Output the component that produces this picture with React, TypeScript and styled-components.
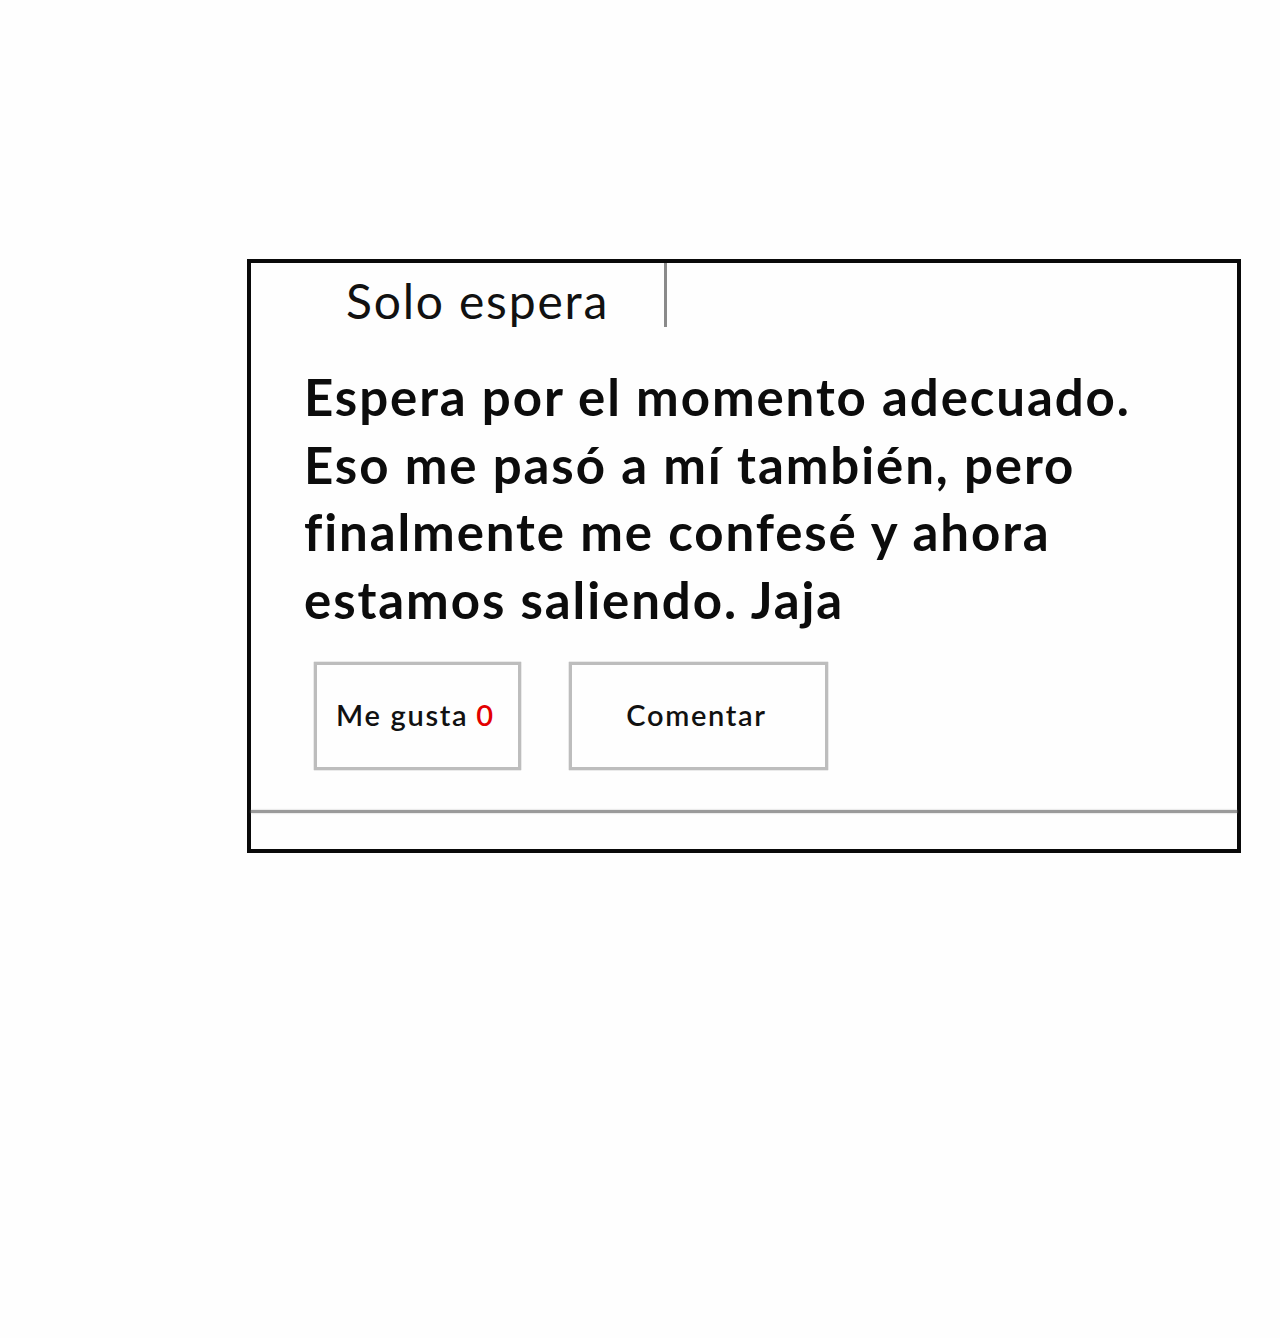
import React from "react";
import styled, { createGlobalStyle } from "styled-components";

const Global = createGlobalStyle`
  html, body { margin: 0; padding: 0; background: #fefefe; }
  body { font-family: Lato, "Open Sans", sans-serif; color: #000; }
`;

const Page = styled.div`
  width: 1280px;
  height: 1338px;
  padding-top: 259px;
  padding-left: 247px;
  box-sizing: border-box;
`;

const Card = styled.div`
  width: 994px;
  height: 594px;
  box-sizing: border-box;
  border: 4px solid #0a0a0a;
  display: flex;
  flex-direction: column;
  background: #fefefe;
`;

const Header = styled.div`
  display: flex;
  align-items: stretch;
  height: 64px;
`;

const TitleBox = styled.div`
  width: 416px;
  box-sizing: border-box;
  padding-left: 95px;
  padding-top: 9px;
  border-right: 3px solid #8a8a8a;
  font-size: 48px;
  font-weight: 400;
  line-height: 58px;
  letter-spacing: 1.8px;
  color: #111;
`;

const Body = styled.p`
  margin: 36px 0 0 53px;
  font-size: 51px;
  font-weight: 700;
  line-height: 67.5px;
  letter-spacing: 1.9px;
  color: #0c0c0c;
  width: 850px;
`;

const Actions = styled.div`
  display: flex;
  gap: 48px;
  margin: 29px 0 0 63px;
`;

const Button = styled.button<{ $w: number }>`
  width: ${(p) => p.$w}px;
  height: 108px;
  box-sizing: border-box;
  border: 3px solid #bdbdbd;
  box-shadow: 0 0 1px #8a8a8a;
  background: #fefefe;
  font-family: Lato, "Open Sans", sans-serif;
  font-size: 29px;
  font-weight: 600;
  letter-spacing: 1.7px;
  color: #111;
  display: flex;
  align-items: center;
  justify-content: center;
  padding: 0 4px 4px 0;
`;

const Count = styled.span`
  color: #e30000;
  margin-left: 8px;
`;

const Spacer = styled.div`
  flex: 1;
`;

const Divider = styled.div`
  height: 3px;
  background: #9a9a9a;
  box-shadow: 0 0 2px #bbb;
`;

const Footer = styled.div`
  height: 36px;
`;

export default function App() {
  return (
    <>
      <Global />
      <Page>
        <Card>
          <Header>
            <TitleBox>Solo espera</TitleBox>
          </Header>
          <Body>
            Espera por el momento adecuado. Eso me pasó a mí también, pero
            finalmente me confesé y ahora estamos saliendo. Jaja
          </Body>
          <Actions>
            <Button $w={207}>
              Me gusta<Count>0</Count>
            </Button>
            <Button $w={259}>Comentar</Button>
          </Actions>
          <Spacer />
          <Divider />
          <Footer />
        </Card>
      </Page>
    </>
  );
}
